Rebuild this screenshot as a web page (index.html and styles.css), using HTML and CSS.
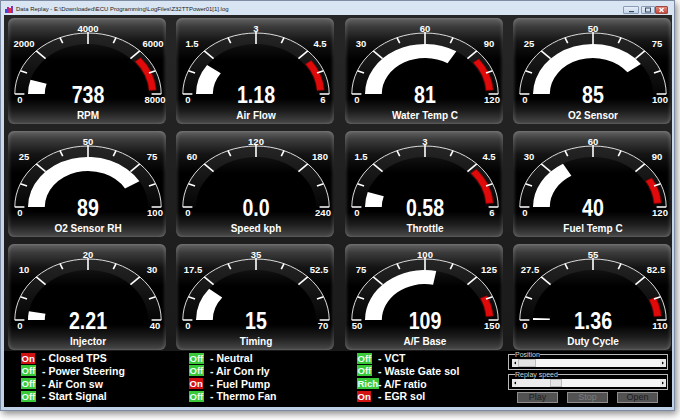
FILE: index.html
```html
<!DOCTYPE html>
<html>
<head>
<meta charset="utf-8">
<title>Data Replay</title>
<link rel="stylesheet" href="styles.css">
</head>
<body>
<svg class="sprite" aria-hidden="true">
  <defs>
    <linearGradient id="ringg" x1="0" y1="0" x2="0" y2="1">
      <stop offset="0" stop-color="#262626"/>
      <stop offset="1" stop-color="#050505"/>
    </linearGradient>
    <g id="ring" transform="translate(80 76) scale(1.2 1)">
      <path d="M-61 0A61 61 0 0 1 61 0L50 0A50 50 0 0 0 -50 0Z" fill="url(#ringg)"/>
    </g>
    <g id="dial" class="dial" transform="translate(80 76) scale(1.2 1)">
      <path class="arc" d="M-61 0A61 61 0 0 1 61 0"/>
      <line x1="-61" y1="0" x2="-53" y2="0"/>
      <line x1="-56.36" y1="-23.34" x2="-50.81" y2="-21.05"/>
      <line x1="-43.13" y1="-43.13" x2="-35.36" y2="-35.36"/>
      <line x1="-23.34" y1="-56.36" x2="-21.05" y2="-50.81"/>
      <line x1="0" y1="-62" x2="0" y2="-50"/>
      <line x1="23.34" y1="-56.36" x2="21.05" y2="-50.81"/>
      <line x1="43.13" y1="-43.13" x2="35.36" y2="-35.36"/>
      <line x1="56.36" y1="-23.34" x2="50.81" y2="-21.05"/>
      <line x1="61" y1="0" x2="53" y2="0"/>
    </g>
  </defs>
</svg>

<div class="window">
  <div class="titlebar">
    <svg class="appicon" viewBox="0 0 8 7" width="8" height="7">
      <rect x="0" y="3" width="2" height="4" fill="#3b4fd0"/>
      <rect x="2" y="1" width="2" height="6" fill="#c0208a"/>
      <rect x="4" y="2" width="2" height="5" fill="#e03030"/>
      <rect x="6" y="0" width="2" height="7" fill="#6a3cc8"/>
    </svg>
    <span class="title">Data Replay - E:\Downloaded\ECU Programming\LogFiles\Z32TTPower01[1].log</span>
    <div class="winbtns">
      <span class="wb wmin"><svg viewBox="0 0 16 8" width="16" height="8"><rect x="6" y="5" width="5" height="1.2" fill="#3a4a60"/></svg></span>
      <span class="wb wmax"><svg viewBox="0 0 14 8" width="14" height="8"><rect x="4.5" y="2" width="5" height="4" fill="none" stroke="#3a4a60" stroke-width="1"/></svg></span>
      <span class="wb wclose"><svg viewBox="0 0 13 8" width="13" height="8"><path d="M4.5 2L8.5 6M8.5 2L4.5 6" stroke="#fff" stroke-width="1.3"/></svg></span>
    </div>
  </div>

  <div class="client">
    <div class="grid">

      <div class="gauge">
        <svg viewBox="0 0 158 106" width="158" height="106">
          <use href="#ring"/>
          <g transform="translate(80 76) scale(1.2 1)">
            <path class="red" d="M43.92 -36.33A57 57 0 0 1 56.86 -3.98L50.88 -3.56A51 51 0 0 0 39.3 -32.5Z"/>
            <path class="bar" d="M-50 0A50 50 0 0 1 -47.92 -14.29L-34.5 -10.29A36 36 0 0 0 -36 0Z"/>
          </g>
          <use href="#dial"/>
          <text x="12" y="85">0</text>
          <text x="16" y="29">2000</text>
          <text x="80" y="13.5">4000</text>
          <text x="145" y="29">6000</text>
          <text x="147" y="85">8000</text>
          <text class="val" transform="translate(80 85) scale(0.8 1)">738</text>
          <text class="nm" x="80" y="101">RPM</text>
        </svg>
      </div>

      <div class="gauge">
        <svg viewBox="0 0 158 106" width="158" height="106">
          <use href="#ring"/>
          <g transform="translate(80 76) scale(1.2 1)">
            <path class="red" d="M46.11 -33.5A57 57 0 0 1 56.86 -3.98L50.88 -3.56A51 51 0 0 0 41.26 -29.98Z"/>
            <path class="bar" d="M-50 0A50 50 0 0 1 -40.76 -28.97L-29.34 -20.85A36 36 0 0 0 -36 0Z"/>
          </g>
          <use href="#dial"/>
          <text x="12" y="85">0</text>
          <text x="16" y="29">1.5</text>
          <text x="80" y="13.5">3</text>
          <text x="144" y="29">4.5</text>
          <text x="147" y="85">6</text>
          <text class="val" transform="translate(80 85) scale(0.8 1)">1.18</text>
          <text class="nm" x="80" y="101">Air Flow</text>
        </svg>
      </div>

      <div class="gauge">
        <svg viewBox="0 0 158 106" width="158" height="106">
          <use href="#ring"/>
          <g transform="translate(80 76) scale(1.2 1)">
            <path class="red" d="M44.92 -35.09A57 57 0 0 1 56.86 -3.98L50.88 -3.56A51 51 0 0 0 40.19 -31.4Z"/>
            <path class="bar" d="M-50 0A50 50 0 0 1 26.13 -42.63L18.81 -30.69A36 36 0 0 0 -36 0Z"/>
          </g>
          <use href="#dial"/>
          <text x="12" y="85">0</text>
          <text x="16" y="29">30</text>
          <text x="80" y="13.5">60</text>
          <text x="144" y="29">90</text>
          <text x="147" y="85">120</text>
          <text class="val" transform="translate(80 85) scale(0.8 1)">81</text>
          <text class="nm" x="80" y="101">Water Temp C</text>
        </svg>
      </div>

      <div class="gauge">
        <svg viewBox="0 0 158 106" width="158" height="106">
          <use href="#ring"/>
          <g transform="translate(80 76) scale(1.2 1)">
            <path class="bar" d="M-50 0A50 50 0 0 1 39.93 -30.09L28.75 -21.66A36 36 0 0 0 -36 0Z"/>
          </g>
          <use href="#dial"/>
          <text x="12" y="85">0</text>
          <text x="16" y="29">25</text>
          <text x="80" y="13.5">50</text>
          <text x="144" y="29">75</text>
          <text x="147" y="85">100</text>
          <text class="val" transform="translate(80 85) scale(0.8 1)">85</text>
          <text class="nm" x="80" y="101">O2 Sensor</text>
        </svg>
      </div>

      <div class="gauge">
        <svg viewBox="0 0 158 106" width="158" height="106">
          <use href="#ring"/>
          <g transform="translate(80 76) scale(1.2 1)">
            <path class="bar" d="M-50 0A50 50 0 0 1 42.86 -25.75L30.86 -18.54A36 36 0 0 0 -36 0Z"/>
          </g>
          <use href="#dial"/>
          <text x="12" y="85">0</text>
          <text x="16" y="29">25</text>
          <text x="80" y="13.5">50</text>
          <text x="144" y="29">75</text>
          <text x="147" y="85">100</text>
          <text class="val" transform="translate(80 85) scale(0.8 1)">89</text>
          <text class="nm" x="80" y="101">O2 Sensor RH</text>
        </svg>
      </div>

      <div class="gauge">
        <svg viewBox="0 0 158 106" width="158" height="106">
          <use href="#ring"/>
          <use href="#dial"/>
          <text x="12" y="85">0</text>
          <text x="16" y="29">60</text>
          <text x="80" y="13.5">120</text>
          <text x="144" y="29">180</text>
          <text x="147" y="85">240</text>
          <text class="val" transform="translate(80 85) scale(0.8 1)">0.0</text>
          <text class="nm" x="80" y="101">Speed kph</text>
        </svg>
      </div>

      <div class="gauge">
        <svg viewBox="0 0 158 106" width="158" height="106">
          <use href="#ring"/>
          <g transform="translate(80 76) scale(1.2 1)">
            <path class="red" d="M42.76 -37.69A57 57 0 0 1 56.86 -3.98L50.88 -3.56A51 51 0 0 0 38.26 -33.73Z"/>
            <path class="bar" d="M-50 0A50 50 0 0 1 -47.71 -14.95L-34.35 -10.76A36 36 0 0 0 -36 0Z"/>
          </g>
          <use href="#dial"/>
          <text x="12" y="85">0</text>
          <text x="16" y="29">1.5</text>
          <text x="80" y="13.5">3</text>
          <text x="144" y="29">4.5</text>
          <text x="147" y="85">6</text>
          <text class="val" transform="translate(80 85) scale(0.8 1)">0.58</text>
          <text class="nm" x="80" y="101">Throttle</text>
        </svg>
      </div>

      <div class="gauge">
        <svg viewBox="0 0 158 106" width="158" height="106">
          <use href="#ring"/>
          <g transform="translate(80 76) scale(1.2 1)">
            <path class="red" d="M49.06 -29.01A57 57 0 0 1 56.86 -3.98L50.88 -3.56A51 51 0 0 0 43.9 -25.96Z"/>
            <path class="bar" d="M-50 0A50 50 0 0 1 -25 -43.3L-18 -31.18A36 36 0 0 0 -36 0Z"/>
          </g>
          <use href="#dial"/>
          <text x="12" y="85">0</text>
          <text x="16" y="29">30</text>
          <text x="80" y="13.5">60</text>
          <text x="144" y="29">90</text>
          <text x="147" y="85">120</text>
          <text class="val" transform="translate(80 85) scale(0.8 1)">40</text>
          <text class="nm" x="80" y="101">Fuel Temp C</text>
        </svg>
      </div>

      <div class="gauge">
        <svg viewBox="0 0 158 106" width="158" height="106">
          <use href="#ring"/>
          <g transform="translate(80 76) scale(1.2 1)">
            <path class="bar" d="M-50 0A50 50 0 0 1 -49.25 -8.64L-35.46 -6.22A36 36 0 0 0 -36 0Z"/>
          </g>
          <use href="#dial"/>
          <text x="12" y="85">0</text>
          <text x="16" y="29">10</text>
          <text x="80" y="13.5">20</text>
          <text x="144" y="29">30</text>
          <text x="147" y="85">40</text>
          <text class="val" transform="translate(80 85) scale(0.8 1)">2.21</text>
          <text class="nm" x="80" y="101">Injector</text>
        </svg>
      </div>

      <div class="gauge">
        <svg viewBox="0 0 158 106" width="158" height="106">
          <use href="#ring"/>
          <g transform="translate(80 76) scale(1.2 1)">
            <path class="bar" d="M-50 0A50 50 0 0 1 -39.08 -31.19L-28.13 -22.46A36 36 0 0 0 -36 0Z"/>
          </g>
          <use href="#dial"/>
          <text x="12" y="85">0</text>
          <text x="17" y="29">17.5</text>
          <text x="80" y="13.5">35</text>
          <text x="143" y="29">52.5</text>
          <text x="147" y="85">70</text>
          <text class="val" transform="translate(80 85) scale(0.8 1)">15</text>
          <text class="nm" x="80" y="101">Timing</text>
        </svg>
      </div>

      <div class="gauge">
        <svg viewBox="0 0 158 106" width="158" height="106">
          <use href="#ring"/>
          <g transform="translate(80 76) scale(1.2 1)">
            <path class="red" d="M51.57 -24.27A57 57 0 0 1 56.86 -3.98L50.88 -3.56A51 51 0 0 0 46.14 -21.72Z"/>
            <path class="bar" d="M-50 0A50 50 0 0 1 9.37 -49.11L6.75 -35.36A36 36 0 0 0 -36 0Z"/>
          </g>
          <use href="#dial"/>
          <text x="12" y="85">50</text>
          <text x="16" y="29">75</text>
          <text x="80" y="13.5">100</text>
          <text x="144" y="29">125</text>
          <text x="147" y="85">150</text>
          <text class="val" transform="translate(80 85) scale(0.8 1)">109</text>
          <text class="nm" x="80" y="101">A/F Base</text>
        </svg>
      </div>

      <div class="gauge">
        <svg viewBox="0 0 158 106" width="158" height="106">
          <use href="#ring"/>
          <g transform="translate(80 76) scale(1.2 1)">
            <path class="red" d="M52.31 -22.64A57 57 0 0 1 56.86 -3.98L50.88 -3.56A51 51 0 0 0 46.81 -20.25Z"/>
            <path class="bar" d="M-50 0A50 50 0 0 1 -49.96 -1.92L-35.97 -1.38A36 36 0 0 0 -36 0Z"/>
          </g>
          <use href="#dial"/>
          <text x="12" y="85">0</text>
          <text x="17" y="29">27.5</text>
          <text x="80" y="13.5">55</text>
          <text x="143" y="29">82.5</text>
          <text x="147" y="85">110</text>
          <text class="val" transform="translate(80 85) scale(0.8 1)">1.36</text>
          <text class="nm" x="80" y="101">Duty Cycle</text>
        </svg>
      </div>

    </div>

    <div class="status">
      <div class="col">
        <div class="row"><span class="slot"><span class="badge on">On</span></span><span class="lbl">- Closed TPS</span></div>
        <div class="row"><span class="slot"><span class="badge off">Off</span></span><span class="lbl">- Power Steering</span></div>
        <div class="row"><span class="slot"><span class="badge off">Off</span></span><span class="lbl">- Air Con sw</span></div>
        <div class="row"><span class="slot"><span class="badge off">Off</span></span><span class="lbl">- Start Signal</span></div>
      </div>
      <div class="col">
        <div class="row"><span class="slot"><span class="badge off">Off</span></span><span class="lbl">- Neutral</span></div>
        <div class="row"><span class="slot"><span class="badge off">Off</span></span><span class="lbl">- Air Con rly</span></div>
        <div class="row"><span class="slot"><span class="badge on">On</span></span><span class="lbl">- Fuel Pump</span></div>
        <div class="row"><span class="slot"><span class="badge off">Off</span></span><span class="lbl">- Thermo Fan</span></div>
      </div>
      <div class="col col3">
        <div class="row"><span class="slot"><span class="badge off">Off</span></span><span class="lbl">- VCT</span></div>
        <div class="row"><span class="slot"><span class="badge off">Off</span></span><span class="lbl">- Waste Gate sol</span></div>
        <div class="row"><span class="slot"><span class="badge off">Rich</span></span><span class="lbl">- A/F ratio</span></div>
        <div class="row"><span class="slot"><span class="badge on">On</span></span><span class="lbl">- EGR sol</span></div>
      </div>
      <div class="controls">
        <fieldset class="grp">
          <legend>Position</legend>
          <div class="sb">
            <span class="arr"><svg viewBox="0 0 6 6" width="6" height="6"><path d="M4 1.5L2 3L4 4.5Z" fill="#000"/></svg></span>
            <span class="thumb pos"></span>
            <span class="track"></span>
            <span class="arr"><svg viewBox="0 0 6 6" width="6" height="6"><path d="M2 1.5L4 3L2 4.5Z" fill="#000"/></svg></span>
          </div>
        </fieldset>
        <fieldset class="grp">
          <legend>Replay speed</legend>
          <div class="sb">
            <span class="arr"><svg viewBox="0 0 6 6" width="6" height="6"><path d="M4 1.5L2 3L4 4.5Z" fill="#000"/></svg></span>
            <span class="pre"></span>
            <span class="thumb spd"></span>
            <span class="track"></span>
            <span class="arr"><svg viewBox="0 0 6 6" width="6" height="6"><path d="M2 1.5L4 3L2 4.5Z" fill="#000"/></svg></span>
          </div>
        </fieldset>
        <div class="btns">
          <button class="btn">Play</button>
          <button class="btn dis">Stop</button>
          <button class="btn">Open</button>
        </div>
      </div>
    </div>
  </div>
</div>
</body>
</html>
```

FILE: styles.css
```css
html, body {
  margin: 0;
  padding: 0;
}
body {
  width: 680px;
  height: 420px;
  overflow: hidden;
  background: #ffffff;
  font-family: "Liberation Sans", Arial, sans-serif;
}
.sprite {
  display: block;
  width: 0;
  height: 0;
  overflow: hidden;
}

/* window frame */
.window {
  box-sizing: border-box;
  width: 675px;
  height: 411px;
  border: 1px solid #7d8ca2;
  background: linear-gradient(180deg, #d9e5f2 0%, #c8d8ea 40%, #bfd1e6 100%);
  padding: 0 2px 3px 3px;
  display: flex;
  flex-direction: column;
  box-shadow: 2px 3px 7px rgba(0, 0, 0, 0.45);
}
.titlebar {
  height: 14px;
  flex: none;
  display: flex;
  align-items: flex-start;
}
.appicon {
  flex: none;
  margin: 5px 3px 0 1px;
}
.title {
  font-size: 5.95px;
  line-height: 8px;
  margin-top: 4px;
  color: #1b1b1b;
  white-space: nowrap;
}
.winbtns {
  margin-left: auto;
  margin-right: 4px;
  margin-top: 5px;
  display: flex;
}
.wb {
  display: block;
  height: 8px;
  box-sizing: border-box;
  border: 1px solid #8a9bb4;
  border-radius: 1px;
}
.wb svg { display: block; margin: -1px; }
.wmin, .wmax {
  background: linear-gradient(#e6eef8, #c5d5ea);
}
.wmin { width: 16px; margin-right: 2px; }
.wmax { width: 14px; }
.wclose {
  width: 13px;
  background: linear-gradient(#e08a7c, #c5473a);
  border-color: #9c4a43;
}

/* client area */
.client {
  flex: 1;
  background: #000;
  display: flex;
  flex-direction: column;
}
.grid {
  display: grid;
  grid-template-columns: repeat(4, 158px);
  grid-template-rows: repeat(3, 106px);
  column-gap: 10.33px;
  row-gap: 7px;
  padding: 3px 0 1px 4px;
  background: linear-gradient(180deg, #262626, #1a1a1a);
}
.gauge {
  width: 158px;
  height: 106px;
  border-radius: 6px;
  overflow: hidden;
  background: linear-gradient(180deg, #636363 0%, #3c3c3c 8%, #141414 22%, #000 40%, #000 76%, #1d1d1d 88%, #4a4a4a 100%);
  box-shadow: inset 2px 0 3px rgba(255, 255, 255, 0.13), inset -2px 0 3px rgba(255, 255, 255, 0.13);
}
.gauge svg { display: block; }
.gauge text {
  font-family: "Liberation Sans", Arial, sans-serif;
  font-weight: 700;
  font-size: 9.5px;
  fill: #fff;
  text-anchor: middle;
}
.gauge text.val { font-size: 24.5px; }
.gauge text.nm { font-size: 10px; }
.bar { fill: #fff; }
.red { fill: #e00a0a; stroke: #8a0000; stroke-width: 0.6px; }
.dial line {
  stroke: #fff;
  stroke-width: 1.6px;
  vector-effect: non-scaling-stroke;
}
.dial .arc {
  fill: none;
  stroke: #dcdcdc;
  stroke-width: 1px;
  vector-effect: non-scaling-stroke;
}

/* status area */
.status {
  flex: 1;
  display: flex;
  padding: 1px 0 0 17px;
  background: #000;
}
.col {
  width: 168px;
  flex: none;
}
.col3 { width: 151px; }
.row {
  height: 12.67px;
  display: flex;
  align-items: center;
}
.slot {
  width: 21px;
  flex: none;
  display: flex;
}
.badge {
  display: block;
  height: 11px;
  line-height: 11px;
  font-size: 9.5px;
  font-weight: 700;
  padding: 0 0.5px;
  white-space: nowrap;
}
.on { background: #d21212; color: #fff; }
.off { background: #38c838; color: #f2fff2; }
.lbl {
  font-size: 10.5px;
  font-weight: 700;
  color: #fff;
  white-space: nowrap;
}

/* controls */
.controls {
  width: 160px;
  flex: none;
  margin-top: -1px;
}
.grp {
  margin: 0;
  padding: 0 1px 2px 3px;
  border: 1px solid #b9b9b9;
  min-width: 0;
}
.grp + .grp { margin-top: 1px; }
.grp legend {
  font-size: 7px;
  line-height: 7px;
  color: #d6d6d6;
  padding: 0;
  margin-left: 3px;
}
.sb {
  height: 8px;
  display: flex;
  background: #f6f6f6;
  margin-top: 1px;
}
.arr {
  width: 6px;
  flex: none;
  background: #e8e8e8;
  display: flex;
  align-items: center;
}
.arr svg { display: block; }
.thumb {
  flex: none;
  box-sizing: border-box;
  background: #e4e4e4;
  border: 1px solid #bdbdbd;
}
.thumb.pos { width: 18px; }
.thumb.spd { width: 12px; }
.pre {
  width: 32px;
  flex: none;
  background: #ececec;
}
.track { flex: 1; }
.btns {
  display: flex;
  gap: 9px;
  padding-left: 9px;
  margin-top: 2px;
}
.btn {
  width: 41px;
  height: 11px;
  padding: 0;
  margin: 0;
  box-sizing: border-box;
  border: 1px solid #8e8e8e;
  background: #525252;
  color: #1c1c1c;
  font-family: "Liberation Sans", Arial, sans-serif;
  font-size: 9px;
  line-height: 9px;
}
.btn.dis { color: #7c7c7c; }
```
